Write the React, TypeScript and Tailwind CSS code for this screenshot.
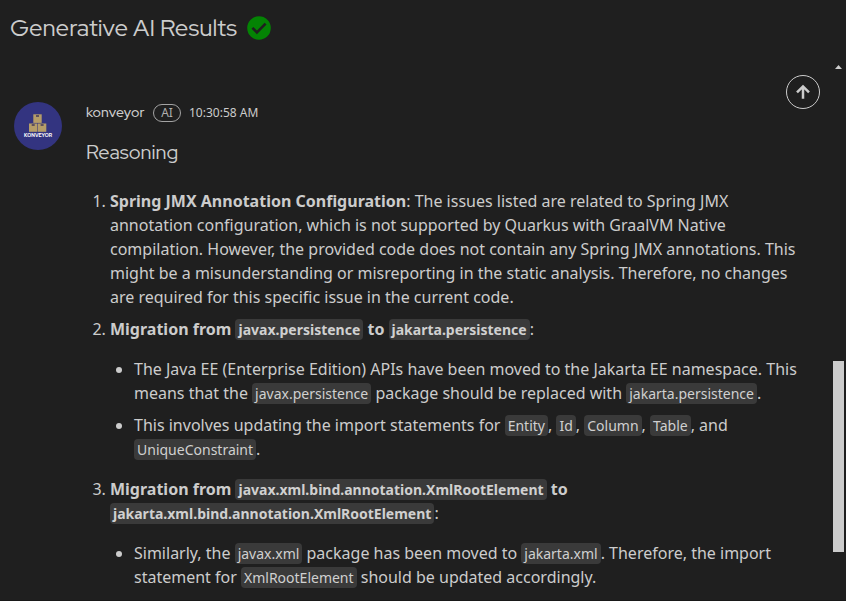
import type { ReactNode } from "react";

function Code({ children }: { children: ReactNode }) {
  return (
    <code className="rounded-[4px] bg-[#3a3a3a] px-[3px] py-px font-['Noto_Sans',sans-serif] text-[14px] leading-[19px] text-[#d0d0d0]">
      {children}
    </code>
  );
}

function Avatar() {
  return (
    <svg className="size-12 shrink-0" viewBox="0 0 48 48" role="img" aria-label="konveyor">
      <circle cx="24" cy="24" r="24" fill="#333480" />
      <g fill="#b59d68">
        <rect x="19.3" y="12.3" width="8.4" height="8.6" />
        <rect x="15" y="21.5" width="8.4" height="8.3" />
        <rect x="23.9" y="21.5" width="8.4" height="8.3" />
      </g>
      <path d="M22 14h3M17.7 23h3M26.6 23h3" stroke="#40375a" strokeWidth="1.3" />
      <text
        x="10"
        y="35.1"
        textLength="28"
        lengthAdjust="spacingAndGlyphs"
        fill="#fff"
        className="font-['Red_Hat_Display','Inter',sans-serif] text-[5.4px] font-extrabold"
      >
        KONVEYOR
      </text>
    </svg>
  );
}

export default function App() {
  return (
    <div className="flex h-[601px] w-[846px] flex-col overflow-hidden border-b border-[#181818] bg-[#1f1f1f] font-['Noto_Sans',sans-serif] text-base text-[#cccccc]">
      <header className="flex h-14 shrink-0 items-center gap-[10px] pl-[10px]">
        <h1 className="w-[227px] whitespace-nowrap font-['Red_Hat_Display','Inter',sans-serif] text-[24px] font-normal">
          Generative AI Results
        </h1>
        <svg className="size-6" viewBox="0 0 24 24">
          <circle cx="12" cy="12" r="11.8" fill="#048304" />
          <path d="M5.4 11.8l4.5 4.5 8.7-8.7" fill="none" stroke="#1f1f1f" strokeWidth="2.6" />
        </svg>
      </header>
      <main className="flex min-h-0 flex-1">
        <section className="flex w-[786px] shrink-0 items-start pl-[14px] pt-[46px]">
          <Avatar />
          <article className="ml-6 w-[714px] shrink-0">
            <div className="flex h-[21px] items-center">
              <span className="w-[67px] font-['Red_Hat_Display','Inter',sans-serif] text-[14px] font-medium tracking-[0.12px]">konveyor</span>
              <span className="flex h-[18px] w-7 items-center justify-center rounded-full border border-[#a3a3a3] text-[12px] leading-none text-[#b0b0b0]">
                AI
              </span>
              <time className="ml-2 text-[12px]">10:30:58 AM</time>
            </div>
            <h2 className="mt-[17px] h-[25px] font-['Red_Hat_Display','Inter',sans-serif] text-[20px] font-normal leading-[25px]">
              Reasoning
            </h2>
            <ol className="mt-6 list-decimal space-y-2 pl-6 leading-6">
              <li>
                <strong>Spring JMX Annotation Configuration</strong>: The issues listed are related to Spring JMX
                annotation configuration, which is not supported by Quarkus with GraalVM Native compilation. However,
                the provided code does not contain any Spring JMX annotations. This might be a misunderstanding or
                misreporting in the static analysis. Therefore, no changes are required for this specific issue in the
                current code.
              </li>
              <li>
                <strong>
                  Migration from <Code>javax.persistence</Code> to <Code>jakarta.persistence</Code>
                </strong>
                :
                <ul className="mt-4 list-disc space-y-2 pb-2 pl-6">
                  <li>
                    The Java EE (Enterprise Edition) APIs have been moved to the Jakarta EE namespace. This means that
                    the <Code>javax.persistence</Code> package should be replaced with <Code>jakarta.persistence</Code>.
                  </li>
                  <li>
                    This involves updating the import statements for <Code>Entity</Code>, <Code>Id</Code>,{" "}
                    <Code>Column</Code>, <Code>Table</Code>, and <Code>UniqueConstraint</Code>.
                  </li>
                </ul>
              </li>
              <li>
                <strong>
                  Migration from <Code>javax.xml.bind.annotation.XmlRootElement</Code> to{" "}
                  <Code>jakarta.xml.bind.annotation.XmlRootElement</Code>
                </strong>
                :
                <ul className="mt-4 list-disc pl-6">
                  <li>
                    Similarly, the <Code>javax.xml</Code> package has been moved to <Code>jakarta.xml</Code>. Therefore,
                    the import statement for <Code>XmlRootElement</Code> should be updated accordingly.
                  </li>
                </ul>
              </li>
            </ol>
          </article>
        </section>
        <button className="mt-[19px] flex size-[34px] shrink-0 items-center justify-center rounded-full border border-[#cccccc]" aria-label="Back to top">
          <svg className="size-4" viewBox="0 0 16 16" fill="none" stroke="#cccccc" strokeWidth="2.5">
            <path d="M8 14.8V2.8M2 8.4L8 2.4l6 6" />
          </svg>
        </button>
        <div className="ml-[13px] flex w-[11px] flex-col items-center">
          <svg className="mt-[9px] h-1 w-[7px]" viewBox="0 0 7 4">
            <path d="M0 4L3.5 0 7 4z" fill="#cccccc" />
          </svg>
          <div className="mt-[292px] h-[191px] w-[11px] bg-[#cccccc]" />
        </div>
      </main>
    </div>
  );
}
